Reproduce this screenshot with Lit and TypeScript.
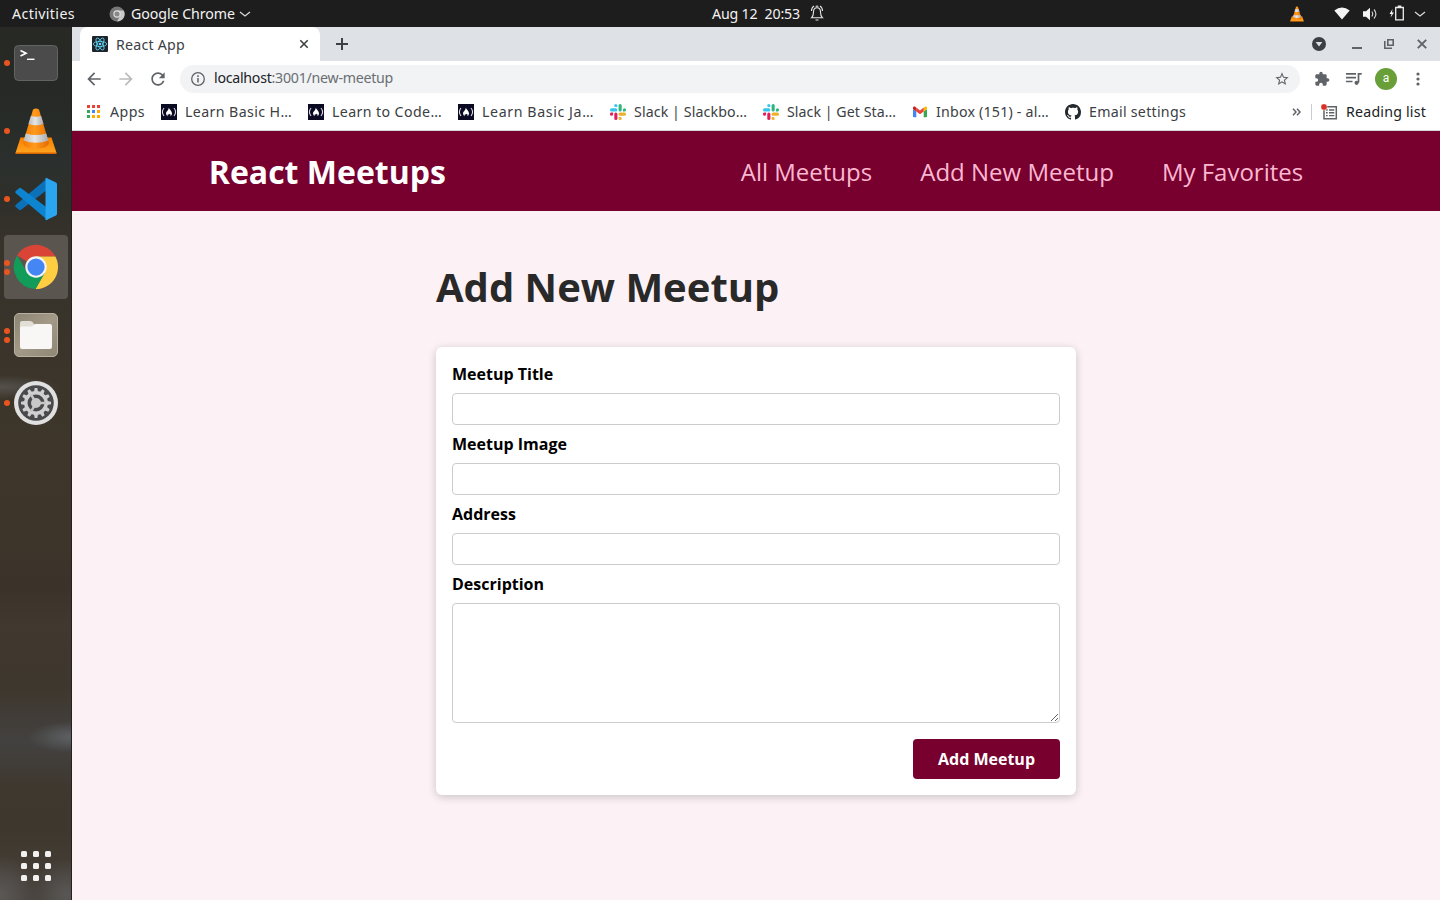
import { LitElement, html, css, svg } from "lit";
import { customElement, property } from "lit/decorators.js";
import { classMap } from "lit/directives/class-map.js";

/** A single line of text whose tracking is adjusted so it fills a given width. */
@customElement("fit-text")
class FitText extends LitElement {
  @property({ type: Number }) width = 0;
  @property() text = "";
  @property() tail = "";
  static styles = css`
    :host { display: block; flex: none; white-space: pre; }
    .run { display: inline-block; }
    .tail { color: #6a6e73; }
  `;
  async firstUpdated() {
    await document.fonts.ready;
    const run = this.renderRoot.querySelector(".run") as HTMLElement;
    const n = this.text.length + this.tail.length;
    this.style.width = `${this.width}px`;
    run.style.letterSpacing = `${(this.width - run.getBoundingClientRect().width) / n}px`;
  }
  render() {
    return html`<span class="run">${this.text}${this.tail ? html`<span class="tail">${this.tail}</span>` : ""}</span>`;
  }
}

const cone = (s: number) => html`<svg width=${s} height=${s} viewBox="0 0 48 48">
  <defs>
    <linearGradient id="co" x1="0" x2="1"><stop offset="0" stop-color="#f57900"/><stop offset=".45" stop-color="#ff9a1c"/><stop offset="1" stop-color="#e56a00"/></linearGradient>
    <linearGradient id="cw" x1="0" x2="1"><stop offset="0" stop-color="#b9b9b9"/><stop offset=".45" stop-color="#e6e6e6"/><stop offset="1" stop-color="#a9a9a9"/></linearGradient>
    <linearGradient id="cb" x1="0" y1="0" x2="0" y2="1"><stop offset="0" stop-color="#f77f00"/><stop offset="1" stop-color="#ffa51f"/></linearGradient>
  </defs>
  <path d="M8.500 30.500H39.500L44.500 46H3.500Z" fill="url(#cb)"/>
  <path d="M3.500 45.500H44.500V47H3.500Z" fill="#d96500"/>
  <path d="M11 36L21 2.500Q24 .5 27 2.500L37 36Q36 41.500 24 41.500T11 36Z" fill="url(#co)"/>
  <path d="M18.900 9Q24 10.500 29.100 9L31.600 17Q24 19.500 16.400 17Z" fill="url(#cw)"/>
  <path d="M13.800 26.500Q24 29.500 34.200 26.500L36.400 33.500Q24 38 11.600 33.500Z" fill="url(#cw)"/>
</svg>`;

const terminal = html`<svg width="46" height="38" viewBox="0 0 46 38">
  <rect x="1.500" y="1.500" width="43" height="35" rx="4" fill="#4b4b4b" stroke="#636363"/>
  <path d="M7.500 6.500L13 9.200L7.500 12" fill="none" stroke="#fff" stroke-width="1.700"/><path d="M14 15.300H21.500" stroke="#fff" stroke-width="1.400"/>
</svg>`;

const vscode = html`<svg width="44" height="44" viewBox="0 0 44 44">
  <path d="M1.500 29.700L5 32.800Q6 33.500 7.200 32.700L33.500 12.500V1L1.600 28.100Q.8 29 1.500 29.700Z" fill="#0b71b8"/>
  <path d="M1.500 14.300L5 11.200Q6 10.500 7.200 11.300L33.500 31V43L1.600 15.900Q.8 15 1.500 14.300Z" fill="#0d84d0"/>
  <path d="M32 .8L42 5.500Q43 6 43 7.200V36.800Q43 38 42 38.500L32 43.200Q31 43 31.500 41.500V2.500Q31 1.200 32 .8Z" fill="#2aa5f0"/>
</svg>`;

const chrome = html`<svg width="46" height="46" viewBox="0 0 48 48">
  <path d="M24 24L4.200 12A23 23 0 0 1 43.900 12.500L44 13H24Z" fill="#da4437"/>
  <path d="M24 13H44.200A23 23 0 0 1 23.500 47L33.500 29.500Z" fill="#ffcd41"/>
  <path d="M4.300 12A23 23 0 0 0 23.500 47L33.500 29.500L14.500 29.500Z" fill="#119d59"/>
  <circle cx="24" cy="24" r="11.200" fill="#f4f4f4"/><circle cx="24" cy="24" r="9" fill="#4486f4"/>
</svg>`;

const files = html`<svg width="46" height="46" viewBox="0 0 46 46">
  <defs><linearGradient id="fg" x1="0" y1="0" x2="1" y2="1"><stop offset="0" stop-color="#8d8573"/><stop offset=".5" stop-color="#a29a87"/><stop offset="1" stop-color="#8f8775"/></linearGradient></defs>
  <rect x="1.500" y="1.500" width="43" height="43" rx="4.500" fill="url(#fg)" stroke="#b8b1a0"/>
  <path d="M7 13V11Q7 9 9 9H17Q19 9 20 10.500L21.500 13H22V18H7Z" fill="#e3dfd6"/>
  <path d="M7 16Q7 14.500 9 14.500H19L22 12H37Q39 12 39 14V34.500Q39 37 37 37H9Q7 37 7 34.500Z" fill="#f8f7f5"/>
</svg>`;

const teeth = Array.from({ length: 12 }, (_, i) => i * 30);
const settings = html`<svg width="46" height="46" viewBox="0 0 46 46">
  <circle cx="23" cy="23" r="22" fill="#e0e0e0"/><circle cx="23" cy="23" r="17.800" fill="#4a4a4c"/>
  ${teeth.map((a) => svg`<path d="M20.800 13L21.700 8H24.300L25.200 13Z" fill="#cfcfcf" transform="rotate(${a} 23 23)"/>`)}
  <circle cx="23" cy="23" r="10.200" fill="none" stroke="#cfcfcf" stroke-width="3.400"/>
  ${[90, 210, 330].map((a) => svg`<path d="M23 23V13" stroke="#c4c4c4" stroke-width="2.500" transform="rotate(${a} 23 23)"/>`)}
  <circle cx="23" cy="23" r="5" fill="#c9c9c9"/>
</svg>`;

const fcc = html`<svg width="16" height="16" viewBox="0 0 16 16"><rect width="16" height="16" fill="#0a0a23"/>
  <path d="M3 4Q-.2 8 3 12M13 4Q16.200 8 13 12" fill="none" stroke="#dcdce4" stroke-width="1.100"/>
  <path d="M7.700 3.700C8.500 5.500 10.900 7 11 9.300Q11 11.200 9.500 12.200Q10 10.700 8.800 9.800Q8 11 7 10.300Q6.200 11 6.700 12.200Q5 11.300 5 9.300C5 7.500 7.700 6.500 7.700 3.700Z" fill="#fff"/></svg>`;

const slack = html`<svg width="16" height="16" viewBox="0 0 16 16">
  <g fill="#36c5f0"><rect x="0" y="4.300" width="7.300" height="3.100" rx="1.500"/><path d="M5.800 0A1.500 1.500 0 0 1 7.300 1.500V3.100H5.800A1.500 1.500 0 0 1 5.800 0Z"/></g>
  <g fill="#2eb67d"><rect x="8.600" y="0" width="3.100" height="7.400" rx="1.500"/><path d="M16 5.800A1.500 1.500 0 0 1 14.500 7.400H12.900V5.800A1.500 1.500 0 0 1 16 5.800Z"/></g>
  <g fill="#ecb22e"><rect x="8.600" y="8.600" width="7.400" height="3.100" rx="1.500"/><path d="M10.200 16A1.500 1.500 0 0 1 8.600 14.500V12.900H10.200A1.500 1.500 0 0 1 10.200 16Z"/></g>
  <g fill="#e01e5a"><rect x="4.300" y="8.600" width="3.100" height="7.400" rx="1.500"/><path d="M0 10.200A1.500 1.500 0 0 1 1.500 8.600H3.100V10.200A1.500 1.500 0 0 1 0 10.200Z"/></g>
</svg>`;

const gmail = html`<svg width="16" height="16" viewBox="0 0 16 16">
  <path d="M1 5L4.300 7.400V13.300H2Q1 13.300 1 12.300Z" fill="#4285f4"/><path d="M15 5L11.700 7.400V13.300H14Q15 13.300 15 12.300Z" fill="#34a853"/>
  <path d="M11.700 3.700V7.500L15 5V4C15 2.600 13.500 2.200 12.500 3Z" fill="#fbbc04"/><path d="M4.300 7.500V3.600L8 6.400L11.700 3.600V7.500L8 10.300Z" fill="#ea4335"/>
  <path d="M1 4V5L4.300 7.500V3.700L3.500 3C2.500 2.200 1 2.600 1 4Z" fill="#c5221f"/></svg>`;

const github = html`<svg width="16" height="16" viewBox="0 0 16 16"><path fill="#24292e" fill-rule="evenodd" d="M8 0C3.580 0 0 3.580 0 8c0 3.540 2.290 6.530 5.470 7.590.4.070.55-.17.55-.38 0-.19-.01-.82-.01-1.490-2.010.37-2.530-.49-2.690-.94-.09-.23-.48-.94-.82-1.130-.28-.15-.68-.52-.01-.53.63-.01 1.080.58 1.230.82.72 1.210 1.870.87 2.330.66.07-.52.28-.87.51-1.070-1.780-.2-3.640-.89-3.640-3.950 0-.87.31-1.590.82-2.150-.08-.2-.36-1.020.08-2.120 0 0 .67-.21 2.200.82.64-.18 1.320-.27 2-.27s1.360.09 2 .27c1.530-1.040 2.200-.82 2.200-.82.44 1.100.16 1.920.08 2.120.51.56.82 1.270.82 2.150 0 3.070-1.870 3.750-3.650 3.950.29.25.54.73.54 1.480 0 1.070-.01 1.930-.01 2.200 0 .21.15.46.55.38A8.010 8.010 0 0 0 16 8c0-4.420-3.580-8-8-8z"/></svg>`;

const material = (d: string, s = 20, c = "#5f6368") => html`<svg width=${s} height=${s} viewBox="0 0 24 24"><path fill=${c} d=${d}/></svg>`;

const dock = [
  { icon: terminal, dots: 1 },
  { icon: cone(48), dots: 1 },
  { icon: vscode, dots: 1 },
  { icon: chrome, dots: 2, active: true },
  { icon: files, dots: 2 },
  { icon: settings, dots: 1 },
];

@customElement("desktop-bar")
class DesktopBar extends LitElement {
  static styles = css`
    :host { display: flex; align-items: center; height: 27px; background: #1d1d1d; color: #f2f2f2; font: 14.200px "Noto Sans", sans-serif; line-height: 26px; padding-left: 12px; box-sizing: border-box; }
    svg { display: block; flex: none; }
    .app { display: flex; align-items: center; margin-left: 34px; gap: 6px; }
    .app svg:last-child { margin-left: -2px; }
    .clock { display: flex; align-items: center; margin-left: 461px; }
    .clock svg { margin-left: 10px; margin-top: -2px; }
    .tray { display: flex; align-items: center; margin-left: auto; padding-right: 14px; }
    .tray :nth-child(1) { margin-right: 29px; }
    .tray :nth-child(2) { margin-right: 12px; }
    .tray :nth-child(3) { margin-right: 11px; }
    .tray :nth-child(4) { margin-right: 9px; margin-top: -1px; }
  `;
  render() {
    return html`<fit-text width="63" text="Activities"></fit-text>
      <div class="app">
        <svg width="16" height="16" viewBox="0 0 16 16"><circle cx="8" cy="8" r="7.500" fill="#777"/><path d="M8 4.500H14.800A7.500 7.500 0 0 1 8 15.500L11 10Z" fill="#c9c9c9"/><circle cx="8" cy="8" r="3.700" fill="#ddd"/><circle cx="8" cy="8" r="2.500" fill="#888"/></svg>
        <fit-text width="104" text="Google Chrome"></fit-text>
        <svg width="12" height="8" viewBox="0 0 12 8"><path d="M1 2L6 6L11 2" fill="none" stroke="#ddd" stroke-width="1.200"/></svg>
      </div>
      <div class="clock"><fit-text width="88" text="Aug 12  20:53"></fit-text>
        <svg width="14" height="16" viewBox="0 0 14 16" fill="none" stroke="#e8e8e8" stroke-width="1.100"><path d="M1.500 12.800Q3.500 11 3.500 7Q3.500 2.800 7 2.800T10.500 7Q10.500 11 12.500 12.800Z"/><path d="M5.500 15H8.500M1.500 6Q1.500 2.500 4 1M12.500 6Q12.500 2.500 10 1M5.700 1.500Q7 .6 8.300 1.500"/></svg>
      </div>
      <div class="tray">${cone(16)}
        <svg width="16" height="13" viewBox="0 0 16 13"><path d="M.3 3.500Q8-2.500 15.700 3.500L8 12.500Z" fill="#f4f4f4"/></svg>
        <svg width="16" height="14" viewBox="0 0 16 14"><path d="M1 4.300H4L8 .8V13.200L4 9.700H1Z" fill="#f4f4f4"/><path d="M9.800 4.500Q11.600 7 9.800 9.500M12 2.500Q15.800 7 12 11.500" fill="none" stroke="#ccc" stroke-width="1.200"/></svg>
        <svg width="16" height="16" viewBox="0 0 16 16"><path d="M3.500 4L.5 9H2.500L1.500 12.500L5 7.500H3Z" fill="#f4f4f4"/><path d="M6.700 2.500H14.300V14.800H6.700ZM8.700 1.200H12.300" fill="none" stroke="#eee" stroke-width="1.300"/></svg>
        <svg width="12" height="8" viewBox="0 0 12 8"><path d="M1 2L6 6L11 2" fill="none" stroke="#ddd" stroke-width="1.200"/></svg>
      </div>`;
  }
}

@customElement("app-dock")
class AppDock extends LitElement {
  static styles = css`
    :host { display: flex; flex-direction: column; gap: 4px; width: 72px; box-sizing: border-box; padding: 4px 4px 15px; flex: none; box-shadow: inset -1px 0 #24221f;
      background:
        radial-gradient(ellipse 44px 16px at 72px 710px, #5b5e61 10%, transparent),
        radial-gradient(ellipse 40px 40px at 0 868px, #5a5755 5%, transparent),
        radial-gradient(ellipse 36px 36px at 66px 868px, #585654 5%, transparent),
        radial-gradient(ellipse 60px 12px at 0 360px, #55514d, transparent),
        linear-gradient(#282925 0, #262925 70px, #2b302e 135px, #302f29 180px, #37332b 215px, #3a342a 330px, #3e362a 420px, #3d352a 520px, #3b332a 560px, #41382f 600px, #3e372d 660px, #434140 715px, #3e382f 760px, #3e372d 800px, #46403a 873px); }
    .tile { height: 64px; flex: none; border-radius: 4px; display: grid; place-items: center; position: relative; }
    .active { background: #5a564f; }
    .dots { position: absolute; left: 0; top: 0; height: 64px; display: flex; flex-direction: column; justify-content: center; gap: 3px; }
    .dot { width: 6px; height: 6px; border-radius: 3px; background: #e95420; }
    .grid { margin: auto auto 0; padding-bottom: 4px; display: grid; grid-template-columns: repeat(3, 6px); gap: 6px; }
    .grid span { height: 6px; border-radius: 1.500px; background: #f2f1ef; }
    svg { display: block; }
  `;
  render() {
    return html`${dock.map((d) => html`<div class=${classMap({ tile: true, active: !!d.active })}>${d.icon}
        <div class="dots">${Array.from({ length: d.dots }, () => html`<span class="dot"></span>`)}</div></div>`)}
      <div class="grid">${Array.from({ length: 9 }, () => html`<span></span>`)}</div>`;
  }
}

const bookmarks = [
  { icon: fcc, text: "Learn Basic H…", w: 107 },
  { icon: fcc, text: "Learn to Code…", w: 110 },
  { icon: fcc, text: "Learn Basic Ja…", w: 112 },
  { icon: slack, text: "Slack | Slackbo…", w: 113 },
  { icon: slack, text: "Slack | Get Sta…", w: 109 },
  { icon: gmail, text: "Inbox (151) - al…", w: 113 },
  { icon: github, text: "Email settings", w: 97 },
];
const appColors = ["#ea4335", "#ea4335", "#ea4335", "#34a853", "#4285f4", "#fbab05", "#34a853", "#fbab05", "#fbab05"];

@customElement("browser-chrome")
class BrowserChrome extends LitElement {
  static styles = css`
    :host { display: block; font: 14.200px "Noto Sans", sans-serif; color: #3c4043; }
    svg { display: block; flex: none; }
    .strip { height: 34px; background: #dee1e6; display: flex; align-items: center; padding: 0 13px 0 8px; box-sizing: border-box; }
    .tab { width: 240px; height: 34px; background: #fff; border-radius: 8px 8px 0 0; display: flex; align-items: center; padding: 0 11px 0 12px; box-sizing: border-box; gap: 8px; }
    .tab svg:last-child { margin-left: auto; }
    .plus { margin-left: 16px; }
    .win { margin-left: auto; display: flex; align-items: center; }
    .win :nth-child(2) { margin-left: 26px; }
    .win :nth-child(3) { margin-left: 22px; }
    .win :nth-child(4) { margin-left: 23px; }
    .bar { height: 36px; display: flex; align-items: center; padding: 0 6px; background: #fff; }
    .cell { width: 32px; display: grid; place-items: center; flex: none; }
    .omni { flex: 1; height: 28px; margin: 0 6px; border-radius: 14px; background: #f1f3f4; display: flex; align-items: center; padding: 0 10px; color: #202124; }
    .omni fit-text { margin-left: 8px; line-height: 18px; padding-bottom: 2px; }
    .star { margin-left: auto; }
    .avatar { width: 22px; height: 22px; border-radius: 11px; background: #689f38; color: #fff; font: 12px/21px Roboto, sans-serif; text-align: center; }
    .marks { height: 34px; display: flex; align-items: center; gap: 16px; padding: 0 14px 4px 15px; box-sizing: border-box; border-bottom: 1px solid #d5d7da; background: #fff; }
    .mark { display: flex; align-items: center; gap: 8px; }
    .apps { gap: 10px; }
    .squares { display: grid; grid-template-columns: repeat(3, 3px); gap: 2px; width: 13px; }
    .squares svg { width: 3px; height: 3px; }
    .end { margin-left: auto; display: flex; align-items: center; color: #202124; }
    .divider { width: 1px; height: 16px; background: #c9ccd0; margin: 0 9px 0 10px; }
    .end fit-text { margin-left: 8px; }
  `;
  render() {
    return html`
      <div class="strip">
        <div class="tab">
          <svg width="16" height="16" viewBox="0 0 16 16"><rect width="16" height="16" rx="1" fill="#20232a"/><g fill="none" stroke="#61dafb" stroke-width=".8"><ellipse cx="8" cy="8" rx="6.700" ry="2.600"/><ellipse cx="8" cy="8" rx="6.700" ry="2.600" transform="rotate(60 8 8)"/><ellipse cx="8" cy="8" rx="6.700" ry="2.600" transform="rotate(120 8 8)"/></g><circle cx="8" cy="8" r="1.300" fill="#61dafb"/></svg>
          <fit-text width="69" text="React App"></fit-text>
          <svg width="10" height="10" viewBox="0 0 10 10"><path d="M1.300 1.300L8.700 8.700M8.700 1.300L1.300 8.700" stroke="#3c4043" stroke-width="1.600"/></svg>
        </div>
        <svg class="plus" width="12" height="12" viewBox="0 0 12 12"><path d="M6 0V12M0 6H12" stroke="#3c4043" stroke-width="2"/></svg>
        <div class="win">
          <svg width="14" height="14" viewBox="0 0 14 14"><circle cx="7" cy="7" r="7" fill="#3c4043"/><path d="M3.600 5H10.400L7 9.500Z" fill="#dee1e6"/></svg>
          <svg width="10" height="10" viewBox="0 0 10 10"><path d="M0 9H10" stroke="#5f6368" stroke-width="2"/></svg>
          <svg width="10" height="10" viewBox="0 0 10 10"><path d="M3.800 .8H9.200V6.200H3.800ZM.8 2V9.200H8" fill="none" stroke="#5f6368" stroke-width="1.600"/></svg>
          <svg width="10" height="10" viewBox="0 0 10 10"><path d="M.8 .8L9.200 9.200M9.200 .8L.8 9.200" stroke="#5f6368" stroke-width="1.900"/></svg>
        </div>
      </div>
      <div class="bar">
        <div class="cell">${material("M20 11H7.830l5.590-5.590L12 4l-8 8 8 8 1.410-1.410L7.830 13H20v-2z")}</div>
        <div class="cell">${material("M12 4l-1.410 1.410L16.170 11H4v2h12.170l-5.580 5.590L12 20l8-8z", 20, "#babcbe")}</div>
        <div class="cell">${material("M17.650 6.350C16.200 4.900 14.210 4 12 4c-4.420 0-7.990 3.580-7.990 8s3.570 8 7.990 8c3.730 0 6.840-2.550 7.730-6h-2.080c-.82 2.330-3.040 4-5.650 4-3.310 0-6-2.690-6-6s2.690-6 6-6c1.660 0 3.140.69 4.220 1.780L13 11h7V4l-2.350 2.350z")}</div>
        <div class="omni">
          <svg width="16" height="16" viewBox="0 0 16 16"><circle cx="8" cy="8" r="6.300" fill="none" stroke="#5f6368" stroke-width="1.300"/><path d="M8 7V11.500M8 4.300V5.900" stroke="#5f6368" stroke-width="1.500"/></svg>
          <fit-text width="179" text="localhost" tail=":3001/new-meetup"></fit-text>
          <span class="star">${material("M22 9.240l-7.190-.62L12 2 9.190 8.630 2 9.240l5.460 4.730L5.820 21 12 17.270 18.180 21l-1.630-7.030L22 9.240zM12 15.400l-3.760 2.270 1-4.280-3.320-2.880 4.380-.38L12 6.100l1.710 4.040 4.380.38-3.320 2.880 1 4.280L12 15.400z", 16)}</span>
        </div>
        <div class="cell">${material("M20.500 11H19V7c0-1.100-.9-2-2-2h-4V3.500C13 2.120 11.880 1 10.500 1S8 2.120 8 3.500V5H4c-1.100 0-1.990.9-1.990 2v3.800H3.500c1.490 0 2.700 1.210 2.700 2.700s-1.210 2.700-2.700 2.700H2V20c0 1.100.9 2 2 2h3.800v-1.500c0-1.490 1.210-2.700 2.700-2.700 1.490 0 2.700 1.210 2.700 2.700V22H17c1.100 0 2-.9 2-2v-4h1.500c1.380 0 2.500-1.120 2.500-2.500S21.880 11 20.500 11z", 16)}</div>
        <div class="cell">
          <svg width="18" height="14" viewBox="0 0 18 14" fill="none" stroke="#5f6368" stroke-width="1.700"><path d="M1 1.900H11M1 5.700H11M1 9.500H7.500M16.700 1.900H13.500V10.500"/><circle cx="11.600" cy="10.800" r="2.100" fill="#5f6368" stroke="none"/></svg>
        </div>
        <div class="cell"><div class="avatar">a</div></div>
        <div class="cell"><svg width="4" height="14" viewBox="0 0 4 14" fill="#5f6368"><circle cx="2" cy="2" r="1.600"/><circle cx="2" cy="7" r="1.600"/><circle cx="2" cy="12" r="1.600"/></svg></div>
      </div>
      <div class="marks">
        <div class="mark apps"><div class="squares">${appColors.map((c) => html`<svg viewBox="0 0 3 3"><rect width="3" height="3" fill=${c}/></svg>`)}</div><fit-text width="35" text="Apps"></fit-text></div>
        ${bookmarks.map((b) => html`<div class="mark">${b.icon}<fit-text width=${b.w} text=${b.text}></fit-text></div>`)}
        <div class="end">
          <svg width="9" height="8" viewBox="0 0 9 8"><path d="M1 .8L4 4L1 7.200M5 .8L8 4L5 7.200" fill="none" stroke="#5f6368" stroke-width="1.500"/></svg>
          <div class="divider"></div>
          <svg width="17" height="16" viewBox="0 0 17 16"><path d="M3 2.800H15.300V14.700H3Z" fill="none" stroke="#5f6368" stroke-width="1.500"/><path d="M5 6H6.700M8 6H13.300M5 8.800H6.700M8 8.800H13.300M5 11.600H6.700M8 11.600H13.300" stroke="#5f6368" stroke-width="1.400"/><circle cx="3" cy="3" r="3.200" fill="#d93025" stroke="#fff" stroke-width=".5"/></svg>
          <fit-text width="80" text="Reading list"></fit-text>
        </div>
      </div>`;
  }
}

@customElement("meetup-page")
class MeetupPage extends LitElement {
  static styles = css`
    :host { display: flex; flex-direction: column; flex: 1; background: #fcf2f6; font-family: "Open Sans", sans-serif; }
    * { box-sizing: border-box; }
    header { height: 80px; flex: none; background: #77002e; padding: 0 10%; display: flex; align-items: center; justify-content: space-between; }
    .logo { font-size: 32px; font-weight: 700; color: #fff; }
    nav { display: flex; gap: 48px; font-size: 24px; color: #fcb8d2; font-weight: 400; }
    main { width: 640px; margin: 48px auto 0; }
    h1 { margin: 0; height: 88px; font-size: 40px; line-height: 56px; color: #292929; }
    .card { background: #fff; border-radius: 6px; box-shadow: 0 2px 8px rgba(0, 0, 0, .2); padding: 16px; height: 448px; }
    label { display: block; font-size: 16px; font-weight: 700; line-height: 22px; margin-bottom: 8px; color: #000; }
    input, textarea { display: block; width: 100%; border: 1px solid #ccc; border-radius: 4px; background: #fff; margin: 0 0 8px; padding: 4px; outline: none; }
    input { height: 32px; }
    textarea { height: 120px; resize: vertical; margin-bottom: 16px; }
    button { display: block; margin-left: auto; width: 147px; height: 40px; border: 0; border-radius: 4px; background: #77002e; color: #fff; font: 700 16px "Open Sans", sans-serif; padding: 0; }
  `;
  render() {
    return html`
      <header><div class="logo">React Meetups</div>
        <nav><span>All Meetups</span><span>Add New Meetup</span><span>My Favorites</span></nav></header>
      <main><h1>Add New Meetup</h1>
        <div class="card">
          <label>Meetup Title</label><input />
          <label>Meetup Image</label><input />
          <label>Address</label><input />
          <label>Description</label><textarea></textarea>
          <button>Add Meetup</button>
        </div>
      </main>`;
  }
}

@customElement("app-root")
class AppRoot extends LitElement {
  static styles = css`
    :host { display: flex; flex-direction: column; width: 1440px; height: 900px; overflow: hidden; }
    .body { display: flex; flex: 1; min-height: 0; }
    .window { flex: 1; min-width: 0; display: flex; flex-direction: column; }
  `;
  render() {
    return html`<desktop-bar></desktop-bar>
      <div class="body"><app-dock></app-dock>
        <div class="window"><browser-chrome></browser-chrome><meetup-page></meetup-page></div>
      </div>`;
  }
}
